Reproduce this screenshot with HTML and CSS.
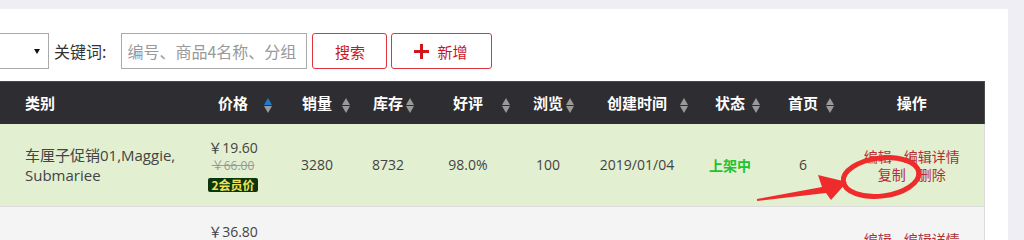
FILE: index.html
```html
<!DOCTYPE html>
<html>
<head>
    <title>商品列表</title>
    <link rel="stylesheet" href="styles.css">
</head>
<body>
    <div class="page">
        <div class="panel">
            <div class="toolbar">
                <div class="select"><span class="caret"></span></div>
                <label class="kw-label">关键词:</label>
                <input class="kw-input" type="text" placeholder="编号、商品4名称、分组">
                <button class="btn btn-search">搜索</button>
                <button class="btn btn-add">
                    <svg class="plus" width="15" height="15" viewBox="0 0 15 15">
                        <rect x="6" y="0" width="3" height="15" fill="#d0161d"/>
                        <rect x="0" y="6" width="15" height="3" fill="#d0161d"/>
                    </svg>
                    新增
                </button>
            </div>

            <table class="goods">
                <colgroup>
                    <col style="width:188px">
                    <col style="width:90px">
                    <col style="width:78px">
                    <col style="width:64px">
                    <col style="width:96px">
                    <col style="width:64px">
                    <col style="width:114px">
                    <col style="width:72px">
                    <col style="width:74px">
                    <col style="width:144px">
                </colgroup>
                <thead>
                    <tr>
                        <th class="col-name">类别</th>
                        <th class="sortable">价格<span class="sort asc"></span></th>
                        <th class="sortable">销量<span class="sort"></span></th>
                        <th class="sortable">库存<span class="sort"></span></th>
                        <th class="sortable">好评<span class="sort"></span></th>
                        <th class="sortable">浏览<span class="sort"></span></th>
                        <th class="sortable">创建时间<span class="sort"></span></th>
                        <th class="sortable">状态<span class="sort"></span></th>
                        <th class="sortable">首页<span class="sort"></span></th>
                        <th>操作</th>
                    </tr>
                </thead>
                <tbody>
                    <tr class="selected">
                        <td class="col-name">车厘子促销01,Maggie,<br>Submariee</td>
                        <td>
                            <div class="price-now">￥19.60</div>
                            <div class="price-old">￥66.00</div>
                            <span class="member">2会员价</span>
                        </td>
                        <td>3280</td>
                        <td>8732</td>
                        <td>98.0%</td>
                        <td>100</td>
                        <td>2019/01/04</td>
                        <td><span class="on-sale">上架中</span></td>
                        <td>6</td>
                        <td class="ops">
                            <a href="#">编辑</a><a href="#">编辑详情</a><a href="#">复制</a><a href="#">删除</a>
                        </td>
                    </tr>
                    <tr>
                        <td class="col-name"></td>
                        <td>
                            <div class="price-now">￥36.80</div>
                            <div class="price-old">￥88.00</div>
                            <span class="member">2会员价</span>
                        </td>
                        <td></td>
                        <td></td>
                        <td></td>
                        <td></td>
                        <td></td>
                        <td></td>
                        <td></td>
                        <td class="ops">
                            <a href="#">编辑</a><a href="#">编辑详情</a><a href="#">复制</a><a href="#">删除</a>
                        </td>
                    </tr>
                </tbody>
            </table>
        </div>

        <!-- red hand-drawn mark over the copy link -->
        <svg class="mark" width="1024" height="240" viewBox="0 0 1024 240">
            <ellipse cx="881" cy="177" rx="38" ry="19" fill="none" stroke="#ef2b2b" stroke-width="5" transform="rotate(-7 881 177)"/>
            <polygon points="757,199 822,187 818,175 847,182 831,200 826,193 757,201" fill="#ef2b2b"/>
        </svg>
    </div>
</body>
</html>
```

FILE: styles.css
```css
/* Base */
* {
    margin: 0;
    padding: 0;
    box-sizing: border-box;
}

body {
    font-family: "Open Sans", "Noto Sans CJK SC", sans-serif;
    background-color: #efeef5;
    color: #444;
    overflow: hidden;
}

.page {
    position: relative;
    height: 240px;
    padding-top: 9px;
}

.panel {
    background-color: #fff;
    margin-right: 16px;
    height: 231px;
}

/* Toolbar */
.toolbar {
    display: flex;
    align-items: center;
    padding-top: 24px;
    height: 60px;
}

.select {
    width: 120px;
    height: 36px;
    margin-left: -71px;
    border: 1px solid #aaa;
    display: flex;
    align-items: center;
    justify-content: flex-end;
    padding-right: 8px;
}

.caret {
    width: 0;
    height: 0;
    border-left: 3px solid transparent;
    border-right: 3px solid transparent;
    border-top: 5px solid #111;
}

.kw-label {
    margin-left: 5px;
    margin-right: 15px;
    font-size: 16px;
    color: #333;
    font-family: "Noto Sans CJK SC", sans-serif;
}

.kw-input {
    width: 186px;
    height: 36px;
    border: 1px solid #aaa;
    padding-left: 5px;
    font-size: 16px;
    font-family: "Noto Sans CJK SC", sans-serif;
    outline: none;
}

.kw-input::placeholder {
    color: #999;
}

.btn {
    height: 36px;
    background-color: #fff;
    border: 1px solid #d9363e;
    border-radius: 3px;
    color: #c8161e;
    font-size: 15px;
    font-family: "Noto Sans CJK SC", sans-serif;
    display: flex;
    align-items: center;
    cursor: pointer;
}

.btn-search {
    width: 75px;
    margin-left: 5px;
    justify-content: center;
}

.btn-add {
    width: 101px;
    margin-left: 4px;
    padding-left: 22px;
}

.plus {
    margin-right: 8px;
}

/* Goods table */
.goods {
    width: 984px;
    table-layout: fixed;
    border-collapse: collapse;
    margin-top: 12px;
    font-size: 14px;
}

.goods th {
    position: relative;
    height: 42px;
    background-color: #2e2d31;
    border-top: 1px solid #4a4a4c;
    color: #fff;
    font-family: "Noto Sans CJK SC", sans-serif;
    font-weight: bold;
    font-size: 15px;
    text-align: center;
}

.goods th:last-child {
    border-right: 1px solid #4a4a4c;
}

.goods td {
    height: 83px;
    text-align: center;
    vertical-align: middle;
    border-bottom: 1px solid #dcdcdc;
    background-color: #f4f4f4;
}

.goods td:last-child {
    border-right: 1px solid #dcdcdc;
}

.goods tr.selected td {
    background-color: #e2efd1;
}

.goods td.col-name {
    text-align: left;
    padding-left: 25px;
    line-height: 20px;
    font-size: 15px;
}

.goods th.col-name {
    text-align: left;
    padding-left: 25px;
}

/* Sort arrows */
.sort {
    position: absolute;
    right: 6px;
    top: 16px;
    width: 8px;
    height: 15px;
}

.sort::before,
.sort::after {
    content: "";
    position: absolute;
    left: 0;
    border-left: 4px solid transparent;
    border-right: 4px solid transparent;
}

.sort::before {
    top: 0;
    border-bottom: 7px solid #9a9a9a;
}

.sort::after {
    bottom: 0;
    border-top: 7px solid #9a9a9a;
}

.sort.asc::before {
    border-bottom-color: #1f7bd2;
}

/* Price cell */
.price-now {
    font-size: 14px;
    line-height: 20px;
    color: #444;
    margin-top: 3px;
}

.price-old {
    font-size: 12px;
    line-height: 15px;
    color: #999;
    text-decoration: line-through;
    margin-bottom: 2px;
}

.member {
    display: inline-block;
    padding: 0 3px;
    font-size: 12px;
    line-height: 14px;
    font-weight: bold;
    font-family: "Noto Sans CJK SC", sans-serif;
    background-color: #0c370c;
    color: #efe25a;
    border-radius: 2px;
}

.on-sale {
    color: #22c230;
    font-weight: bold;
    font-family: "Noto Sans CJK SC", sans-serif;
}

/* Operations */
.ops {
    padding: 0 8px;
    line-height: 18px;
    font-family: "Noto Sans CJK SC", sans-serif;
}

.ops a {
    color: #b52d34;
    text-decoration: none;
    margin: 0 6px;
}

/* Annotation */
.mark {
    position: absolute;
    top: 0;
    left: 0;
    pointer-events: none;
}
```
